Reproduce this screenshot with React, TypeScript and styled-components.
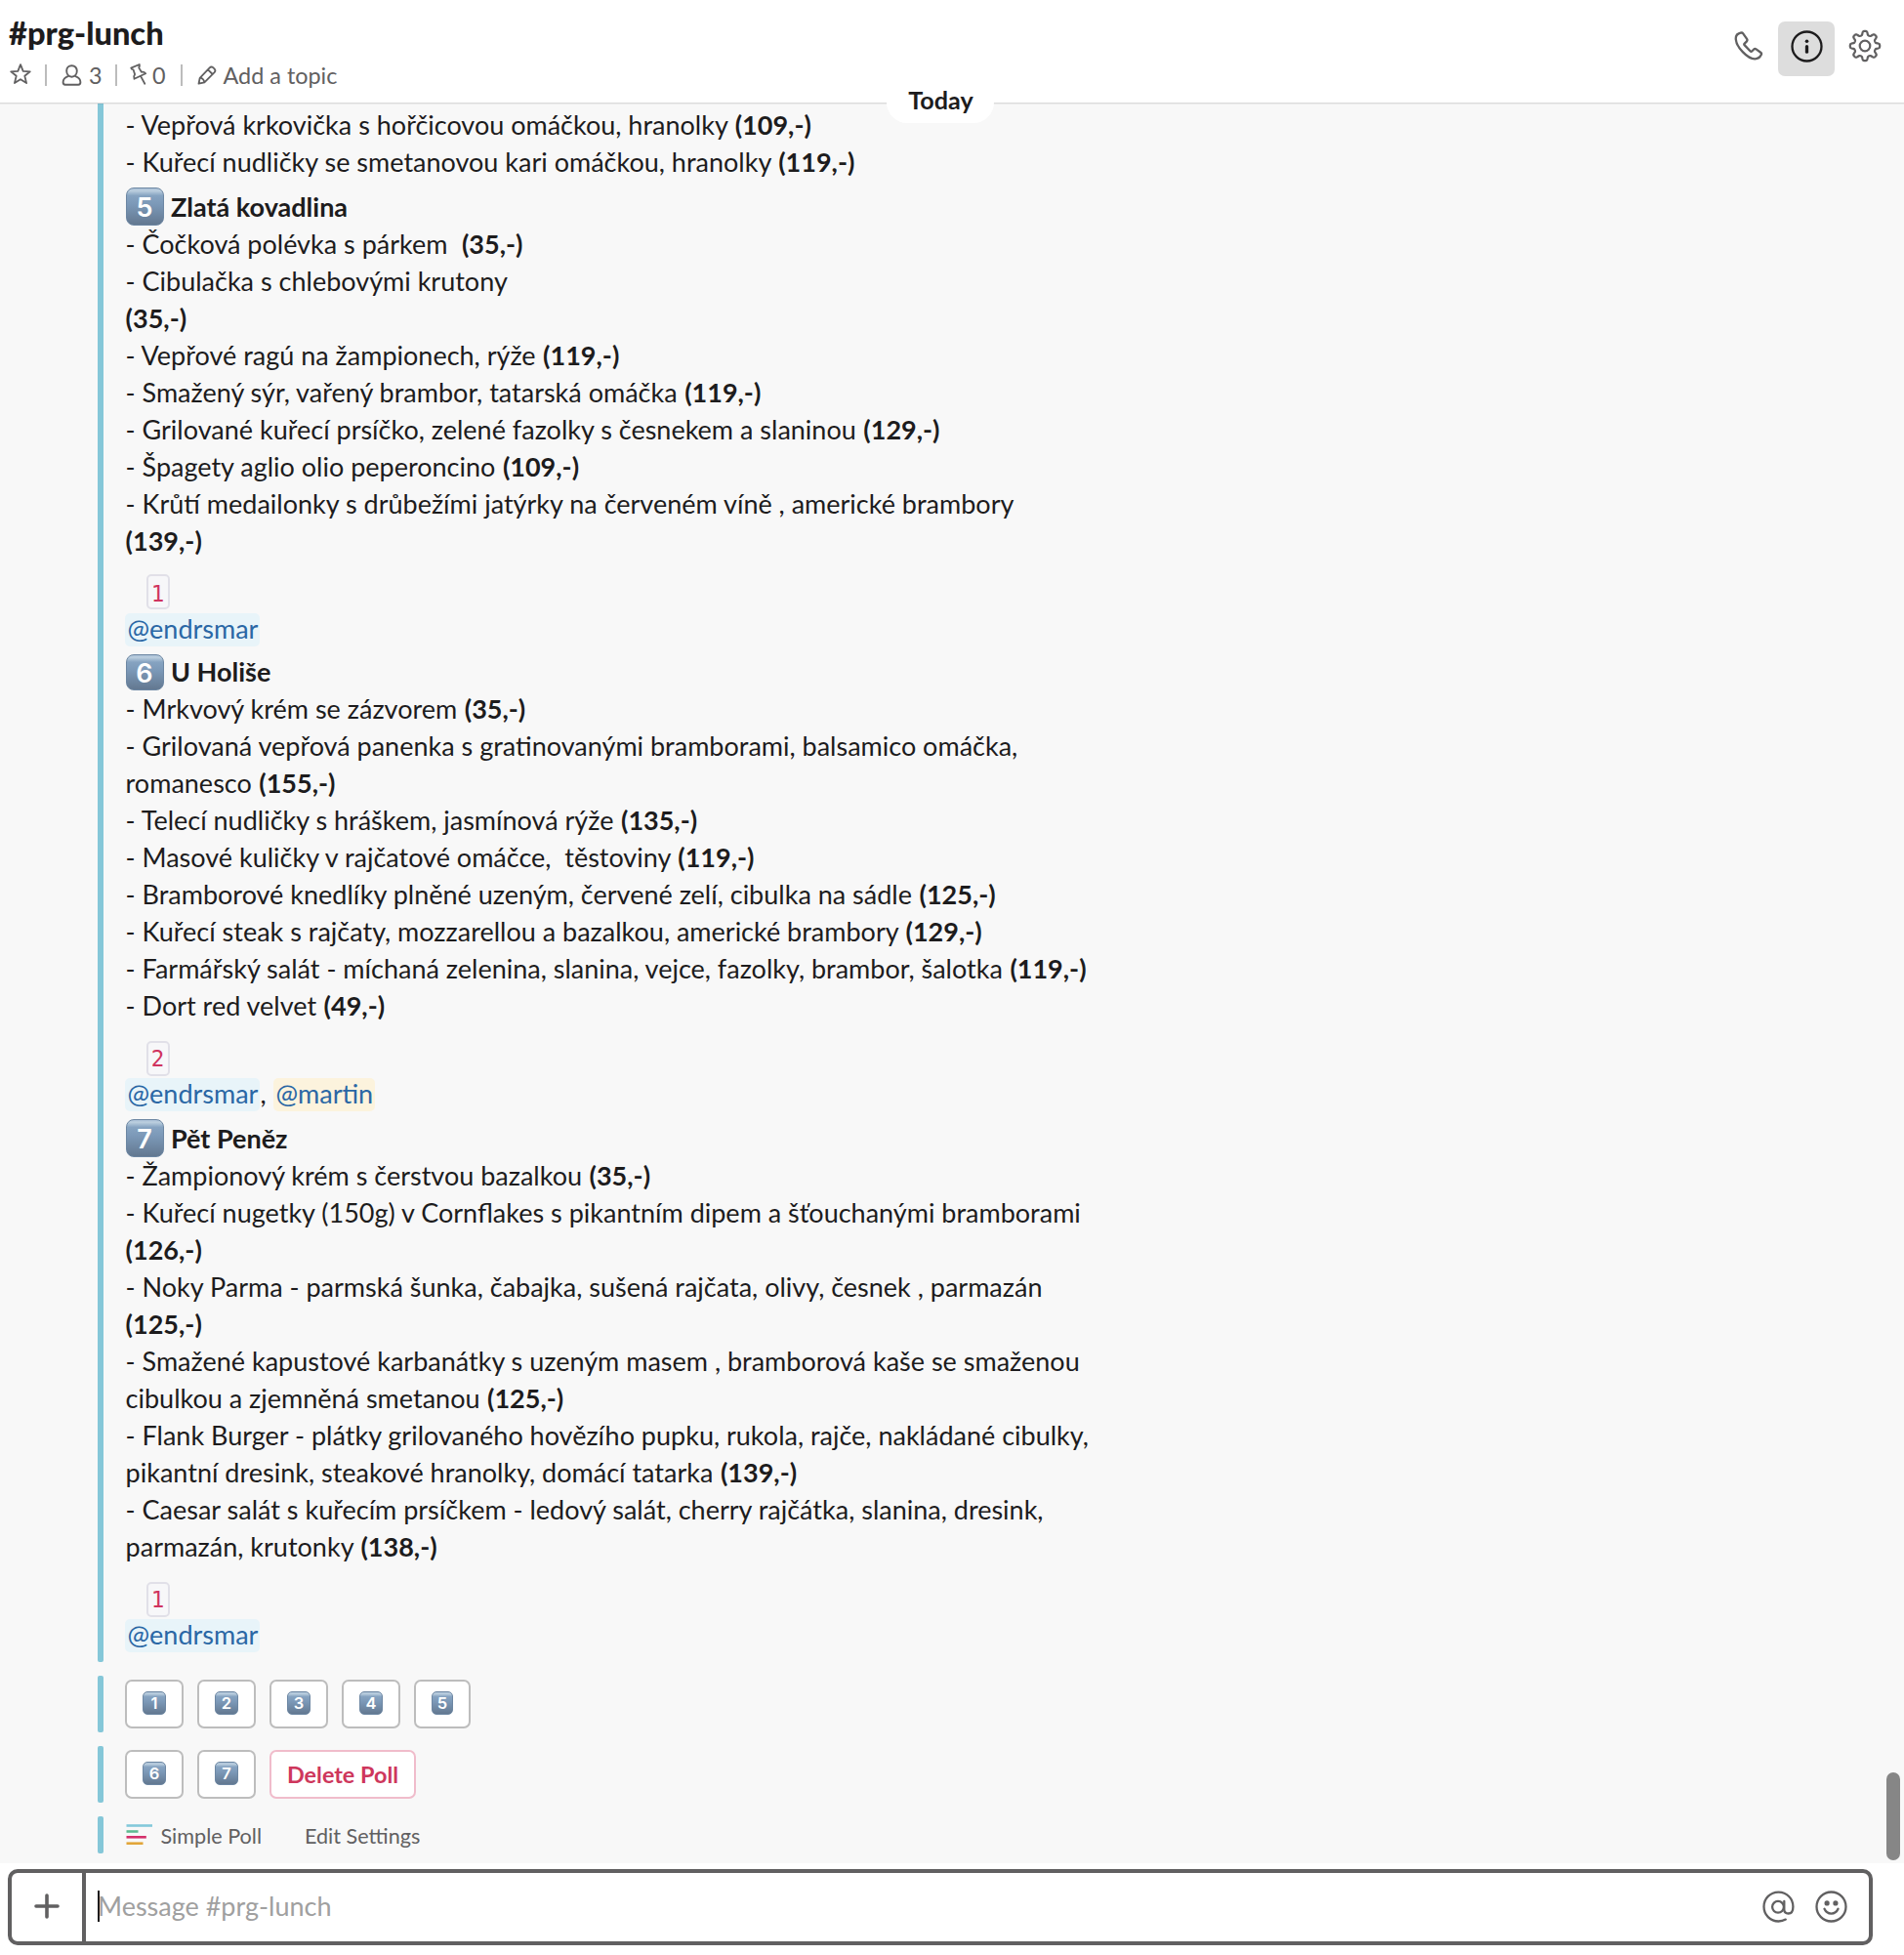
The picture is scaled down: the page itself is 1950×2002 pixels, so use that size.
import React from "react";
import styled, { createGlobalStyle } from "styled-components";

const GlobalStyle = createGlobalStyle`
  * { box-sizing: border-box; }
  body {
    margin: 0;
    background: #fff;
    color: #1d1c1d;
    font-family: Lato, "Open Sans", sans-serif;
    font-size: 27px;
  }
`;

const Page = styled.div`
  display: flex;
  flex-direction: column;
  width: 1950px;
  height: 2002px;
  overflow: hidden;
  background: #fff;
`;

/* ---------- header ---------- */

const Header = styled.header`
  position: relative;
  display: flex;
  justify-content: space-between;
  flex: none;
  height: 106px;
  padding: 14px 9px 0 9px;
  border-bottom: 1px solid #dcdcdc;
  box-shadow: 0 1px 0 rgba(0, 0, 0, 0.05);
`;

const Title = styled.h1`
  margin: 0;
  font-size: 32.6px;
  font-weight: 900;
  line-height: 40px;
`;

const Meta = styled.div`
  display: flex;
  align-items: center;
  height: 30px;
  margin-top: 8px;
  color: #616061;
  font-size: 23.4px;
  line-height: 30px;
`;

const Divider = styled.i<{ $l?: number }>`
  width: 2px;
  height: 22px;
  margin-left: ${(p) => p.$l ?? 0}px;
  background: #bcbcbc;
`;

const MetaText = styled.span<{ $w: number; $gap: number }>`
  width: ${(p) => p.$w}px;
  margin-left: ${(p) => p.$gap}px;
  margin-bottom: 1px;
  white-space: nowrap;
`;

const Icon = styled.svg<{ $l?: number; $up?: number }>`
  display: block;
  flex: none;
  overflow: visible;
  margin-left: ${(p) => p.$l ?? 0}px;
  margin-bottom: ${(p) => p.$up ?? 0}px;
  fill: none;
  stroke: currentColor;
  stroke-linecap: round;
  stroke-linejoin: round;
`;

const PollLogo = styled(Icon)`
  stroke-linecap: butt;
`;

const HeaderActions = styled.div`
  display: flex;
  height: 56px;
  margin-top: 8px;
  color: #616061;
`;

const HeaderButton = styled.button<{ $active?: boolean }>`
  display: flex;
  justify-content: center;
  width: 58px;
  height: 56px;
  margin-right: 2px;
  padding: 9px 0 0;
  border: 0;
  border-radius: 7px;
  background: ${(p) => (p.$active ? "#dddddd" : "transparent")};
  color: ${(p) => (p.$active ? "#1d1c1d" : "#616061")};
`;

const DayPill = styled.div`
  position: absolute;
  left: 908px;
  top: 84px;
  width: 110px;
  height: 42px;
  padding-left: 1px;
  border-radius: 21px;
  background: #fff;
  font-size: 25.2px;
  font-weight: 700;
  line-height: 37px;
  text-align: center;
  z-index: 1;
`;

/* ---------- messages ---------- */

const Messages = styled.main`
  display: flex;
  justify-content: space-between;
  flex: none;
  height: 1802px;
  padding-left: 100px;
  background: #f8f8f8;
`;

const Attachments = styled.div`
  display: flex;
  flex-direction: column;
  gap: 14px;
`;

const Attachment = styled.section<{ $h: number; $first?: boolean }>`
  display: flex;
  height: ${(p) => p.$h}px;
  &::before {
    content: "";
    width: 6px;
    margin-right: 22px;
    border-radius: ${(p) => (p.$first ? "0 0 2px 2px" : "2px")};
    background: #85c7d8;
  }
`;

const Body = styled.div`
  padding-top: 2px;
`;

const Line = styled.div`
  height: 38px;
  padding-left: 0.6px;
  line-height: 40px;
  white-space: pre;
`;

const Price = styled.b<{ $inline: boolean }>`
  margin-left: ${(p) => (p.$inline ? 0.6 : 0)}px;
`;

const HeadingLine = styled.div<{ $h: number }>`
  display: flex;
  height: ${(p) => p.$h}px;
  padding-left: 0.5px;
  font-weight: 700;
  line-height: 40px;
  white-space: pre;
`;

const HeadingText = styled.span<{ $top: number }>`
  margin: ${(p) => p.$top}px 0 0 7.5px;
`;

const Keycap = styled.span<{ $w: number; $h: number; $small?: boolean }>`
  display: flex;
  flex: none;
  align-items: center;
  justify-content: center;
  width: ${(p) => p.$w}px;
  height: ${(p) => p.$h}px;
  margin-top: ${(p) => (p.$small ? 0 : 8)}px;
  padding-top: ${(p) => (p.$small ? 0 : 1)}px;
  border: ${(p) => (p.$small ? 1 : 1.5)}px solid #6d87a3;
  border-radius: ${(p) => (p.$small ? 5 : 8)}px;
  background: linear-gradient(#a9bfd6 0%, #bccfdf 6%, #86a3c1 20%, #7b98b7 45%, #637890 100%);
  color: #fff;
  font-family: Inter, sans-serif;
  font-size: ${(p) => (p.$small ? 16.5 : 27)}px;
  font-weight: 600;
  line-height: 1;
`;

const CountLine = styled.div<{ $top: number }>`
  height: 52px;
  padding: ${(p) => p.$top}px 0 0 22px;
`;

const Count = styled.code<{ $pad: number }>`
  display: block;
  width: 24px;
  height: 36px;
  padding-top: ${(p) => p.$pad}px;
  border: 2px solid #e1e0e8;
  border-radius: 5px;
  background: #f7f7f9;
  color: #d0335f;
  font: 22.5px/26px "DejaVu Sans Mono", monospace;
  text-align: center;
  text-indent: -1px;
`;

const MentionLine = styled.div`
  display: flex;
  height: 38px;
  padding-top: 4px;
  line-height: 32px;
`;

const Mention = styled.a<{ $self?: boolean }>`
  height: 34px;
  padding: 0 2px 0 2.5px;
  border-radius: 5px;
  background: ${(p) => (p.$self ? "#fcf3dd" : "#e8f4f9")};
  color: #2a67a5;
`;

const Comma = styled.span`
  width: 13.5px;
`;

const Buttons = styled.div`
  display: flex;
  gap: 14px;
  padding-top: 4px;
`;

const PollButton = styled.button<{ $w?: number; $danger?: boolean }>`
  display: flex;
  align-items: center;
  justify-content: center;
  width: ${(p) => p.$w ?? 60}px;
  height: 50px;
  padding: 0 0 ${(p) => (p.$danger ? 0 : 2)}px;
  border: 2px solid ${(p) => (p.$danger ? "#f0bccb" : "#bdbdbd")};
  border-radius: 7px;
  background: #fff;
  color: #ce375c;
  font: 700 23.4px/30px Lato, sans-serif;
`;

const Footer = styled.div`
  display: flex;
  align-items: center;
  color: #616061;
  font-size: 21.6px;
  line-height: 38px;
`;

const AppName = styled.span`
  width: 147.5px;
  margin: 2px 0 0 7.5px;
`;

const FooterAction = styled.span`
  margin-top: 2px;
`;

const Thumb = styled.div`
  align-self: flex-end;
  width: 14px;
  height: 90px;
  margin: 0 4px 3px 0;
  border-radius: 7px;
  background: #868686;
`;

/* ---------- composer ---------- */

const Composer = styled.footer`
  display: flex;
  flex: none;
  align-items: stretch;
  width: 1910px;
  height: 78px;
  margin: 6px 0 0 8px;
  border: 4px solid #616061;
  border-radius: 10px;
  color: #616061;
`;

const AddButton = styled.div`
  display: flex;
  align-items: center;
  justify-content: center;
  width: 76px;
  padding-right: 1px;
  padding-bottom: 2px;
  border-right: 4px solid #616061;
`;

const Input = styled.div`
  display: flex;
  flex: 1;
  align-items: center;
  padding-left: 12px;
  padding-bottom: 2px;
  color: #a0a0a0;
`;

const Placeholder = styled.span`
  padding-bottom: 2px;
`;

const Caret = styled.i`
  width: 2px;
  height: 32px;
  margin-right: -2px;
  background: #1d1c1d;
  z-index: 1;
`;

const ComposerActions = styled.div`
  display: flex;
  align-items: center;
  gap: 21px;
  padding: 0 22px 2px 0;
`;

type Dish = [text: string, price?: string];

const DishLines = ({ dishes }: { dishes: Dish[] }) => (
  <>
    {dishes.map(([text, price], i) => (
      <Line key={i}>
        {text}
        {price && <Price $inline={text !== ""}>({price},-)</Price>}
      </Line>
    ))}
  </>
);

const previous: Dish[] = [
  ["- Vepřová krkovička s hořčicovou omáčkou, hranolky ", "109"],
  ["- Kuřecí nudličky se smetanovou kari omáčkou, hranolky ", "119"],
];

const kovadlina: Dish[] = [
  ["- Čočková polévka s párkem  ", "35"],
  ["- Cibulačka s chlebovými krutony"],
  ["", "35"],
  ["- Vepřové ragú na žampionech, rýže ", "119"],
  ["- Smažený sýr, vařený brambor, tatarská omáčka ", "119"],
  ["- Grilované kuřecí prsíčko, zelené fazolky s česnekem a slaninou ", "129"],
  ["- Špagety aglio olio peperoncino ", "109"],
  ["- Krůtí medailonky s drůbežími jatýrky na červeném víně , americké brambory"],
  ["", "139"],
];

const holise: Dish[] = [
  ["- Mrkvový krém se zázvorem ", "35"],
  ["- Grilovaná vepřová panenka s gratinovanými bramborami, balsamico omáčka,"],
  ["romanesco ", "155"],
  ["- Telecí nudličky s hráškem, jasmínová rýže ", "135"],
  ["- Masové kuličky v rajčatové omáčce,  těstoviny ", "119"],
  ["- Bramborové knedlíky plněné uzeným, červené zelí, cibulka na sádle ", "125"],
  ["- Kuřecí steak s rajčaty, mozzarellou a bazalkou, americké brambory ", "129"],
  ["- Farmářský salát - míchaná zelenina, slanina, vejce, fazolky, brambor, šalotka ", "119"],
  ["- Dort red velvet ", "49"],
];

const petPenez: Dish[] = [
  ["- Žampionový krém s čerstvou bazalkou ", "35"],
  ["- Kuřecí nugetky (150g) v Cornflakes s pikantním dipem a šťouchanými bramborami"],
  ["", "126"],
  ["- Noky Parma - parmská šunka, čabajka, sušená rajčata, olivy, česnek , parmazán"],
  ["", "125"],
  ["- Smažené kapustové karbanátky s uzeným masem , bramborová kaše se smaženou"],
  ["cibulkou a zjemněná smetanou ", "125"],
  ["- Flank Burger - plátky grilovaného hovězího pupku, rukola, rajče, nakládané cibulky,"],
  ["pikantní dresink, steakové hranolky, domácí tatarka ", "139"],
  ["- Caesar salát s kuřecím prsíčkem - ledový salát, cherry rajčátka, slanina, dresink,"],
  ["parmazán, krutonky ", "138"],
];

const Heading = ({ n, name, h = 46, cap = 39 }: { n: number; name: string; h?: number; cap?: number }) => (
  <HeadingLine $h={h}>
    <Keycap $w={39} $h={cap}>{n}</Keycap>
    <HeadingText $top={h - 38}>{name}</HeadingText>
  </HeadingLine>
);

const VoteButton = ({ n, w = 60, cap = 24 }: { n: number; w?: number; cap?: number }) => (
  <PollButton $w={w}>
    <Keycap $small $w={cap} $h={24}>{n}</Keycap>
  </PollButton>
);

/* Eight-toothed outline, sampled around the centre of a 32px box. */
const gearPath = (() => {
  const pts: string[] = [];
  const steps = 160;
  for (let i = 0; i < steps; i++) {
    const a = (i / steps) * Math.PI * 2;
    const wave = Math.tanh(2.1 * Math.cos(8 * a)) / Math.tanh(2.1);
    const r = 13.2 + 2 * wave;
    pts.push(`${(16 + r * Math.sin(a)).toFixed(2)} ${(16 - r * Math.cos(a)).toFixed(2)}`);
  }
  return `M${pts.join("L")}Z`;
})();

export default function App() {
  return (
    <Page>
      <GlobalStyle />
      <Header>
        <div>
          <Title>#prg-lunch</Title>
          <Meta>
            <Icon $l={1} $up={2} width="22" height="22" viewBox="0 0 22 22" strokeWidth="1.8">
              <path d="M11 1.2l2.7 6.6 7.1.5-5.5 4.5 1.8 7.3-6.1-3.9-6.1 3.9 1.8-7.3L1.2 8.3l7.1-.5z" />
            </Icon>
            <Divider $l={14} />
            <Icon $l={15} width="21" height="22" viewBox="0 0 21 22" strokeWidth="1.9">
              <path d="M10.5 1.2c-3.2 0-5.3 2.3-5.3 5.4 0 3.4 2.2 6.1 5.3 6.1s5.3-2.7 5.3-6.1c0-3.1-2.1-5.4-5.3-5.4z" />
              <path d="M6.7 12.2C3.4 13.4 1.6 15.4 1.6 18.3c0 1.6.7 2.4 2.2 2.4h13.4c1.5 0 2.2-.8 2.2-2.4 0-2.9-1.8-4.9-5.1-6.1" />
            </Icon>
            <MetaText $w={27} $gap={7}>3</MetaText>
            <Divider />
            <Icon $l={13} $up={3} width="18" height="22" viewBox="0 0 18 22" strokeWidth="1.8">
              <path d="M1.2 4.6L9.8 1c.4 1.6.1 2.5-.6 3.4l2.7 4.4c1.6-.4 3.1.1 4.3 1.500L4.500 15.800c-.7-1.700-.5-3.300.6-4.700L3.500 6.300C2.600 6.300 1.500 6 1.200 4.600zM11 12.900l4.300 7.900" />
            </Icon>
            <MetaText $w={29} $gap={5}>0</MetaText>
            <Divider />
            <Icon $l={15} width="20" height="20" viewBox="0 0 20 20" strokeWidth="1.8">
              <path d="M1.5 18.7l1.2-5.9L12.7 2.4c1-1.1 2.4-1.2 3.5-.2l1.5 1.5c1 1.1.9 2.4-.1 3.5L7.4 17.3zM3 12.7c2.3.4 3.8 1.9 4.300 4.400M11 4.300l4.700 4.700" />
            </Icon>
            <MetaText $w={130} $gap={6.5}>Add a topic</MetaText>
          </Meta>
        </div>
        <HeaderActions>
          <HeaderButton>
            <Icon $l={1} width="30" height="32" viewBox="0 0 30 32" strokeWidth="2.3">
              <path d="M6.6 2.6C3.5 3.4 1.5 5.9 1.8 9.3c.3 4 3.2 9 7 12.8 4.1 4.3 8.5 7.3 12.6 7.2 2.8 0 5.3-1.9 6.5-4.5.4-.9 0-1.6-.7-2.1l-4.6-3.3c-.8-.6-1.7-.6-2.4.1l-2 2c-.5.5-1 .5-1.5 0l-6.1-6.4c-.5-.5-.4-1 .1-1.5l2.2-2.2c.7-.8.8-1.6.2-2.5L9.2 3.4c-.6-.9-1.5-1.1-2.6-.8z" />
            </Icon>
          </HeaderButton>
          <HeaderButton $active>
            <Icon width="33" height="33" viewBox="0 0 33 33" strokeWidth="2.3">
              <circle cx="16.5" cy="16.5" r="15" />
              <circle cx="16.5" cy="11.2" r="1.8" fill="currentColor" stroke="none" />
              <path d="M16.5 16.7v5.5" strokeWidth="3.3" />
            </Icon>
          </HeaderButton>
          <HeaderButton>
            <Icon width="32" height="32" viewBox="0 0 32 32" strokeWidth="2.2">
              <path d={gearPath} />
              <circle cx="16" cy="16" r="5.3" />
            </Icon>
          </HeaderButton>
        </HeaderActions>
        <DayPill>Today</DayPill>
      </Header>

      <Messages>
        <Attachments>
          <Attachment $h={1596} $first>
            <Body>
              <DishLines dishes={previous} />
              <Heading n={5} name="Zlatá kovadlina" />
              <DishLines dishes={kovadlina} />
              <CountLine $top={16}><Count $pad={5}>1</Count></CountLine>
              <MentionLine><Mention>@endrsmar</Mention></MentionLine>
              <Heading n={6} name="U Holiše" h={44} cap={37} />
              <DishLines dishes={holise} />
              <CountLine $top={18}><Count $pad={3}>2</Count></CountLine>
              <MentionLine>
                <Mention>@endrsmar</Mention>
                <Comma>,</Comma>
                <Mention $self>@martin</Mention>
              </MentionLine>
              <Heading n={7} name="Pět Peněz" />
              <DishLines dishes={petPenez} />
              <CountLine $top={18}><Count $pad={3}>1</Count></CountLine>
              <MentionLine><Mention>@endrsmar</Mention></MentionLine>
            </Body>
          </Attachment>
          <Attachment $h={58}>
            <Buttons>
              <VoteButton n={1} />
              <VoteButton n={2} />
              <VoteButton n={3} />
              <VoteButton n={4} />
              <VoteButton n={5} w={58} cap={22} />
            </Buttons>
          </Attachment>
          <Attachment $h={58}>
            <Buttons>
              <VoteButton n={6} />
              <VoteButton n={7} />
              <PollButton $danger $w={150}>Delete Poll</PollButton>
            </Buttons>
          </Attachment>
          <Attachment $h={38}>
            <Footer>
              <PollLogo $l={1} width="28" height="24" viewBox="0 0 28 24" strokeWidth="2.6">
                <path d="M.5 2.5h26.5" stroke="#83c9da" />
                <path d="M.5 8.5h12" stroke="#5fbb92" />
                <path d="M.5 14.3h20.3" stroke="#d4306b" />
                <path d="M.5 20.7h17" stroke="#e2a63a" />
              </PollLogo>
              <AppName>Simple Poll</AppName>
              <FooterAction>Edit Settings</FooterAction>
            </Footer>
          </Attachment>
        </Attachments>
        <Thumb />
      </Messages>

      <Composer>
        <AddButton>
          <Icon width="26" height="26" viewBox="0 0 26 26" strokeWidth="3.6">
            <path d="M13 2v22M2 13h22" />
          </Icon>
        </AddButton>
        <Input>
          <Caret />
          <Placeholder>Message #prg-lunch</Placeholder>
        </Input>
        <ComposerActions>
          <Icon width="33" height="33" viewBox="0 0 33 33" strokeWidth="2.3">
            <circle cx="16" cy="16.8" r="5.9" />
            <path d="M22.3 11v8.2c0 2.6 1.5 4.3 4.3 4.3 3.2 0 4.8-2.5 4.8-7C31.4 8.2 25 1.6 16.5 1.6S1.5 8.2 1.5 16.5s6.5 15 15 15c2.8 0 5.2-.7 7.3-1.9" />
          </Icon>
          <Icon width="33" height="33" viewBox="0 0 33 33" strokeWidth="2.3">
            <circle cx="16.5" cy="16.5" r="15" />
            <circle cx="12.1" cy="12.9" r="2.6" fill="currentColor" stroke="none" />
            <circle cx="20.9" cy="12.9" r="2.6" fill="currentColor" stroke="none" />
            <path d="M9.5 18.8c1.4 3.2 4 4.8 7 4.8s5.6-1.6 7-4.8" />
          </Icon>
        </ComposerActions>
      </Composer>
    </Page>
  );
}
